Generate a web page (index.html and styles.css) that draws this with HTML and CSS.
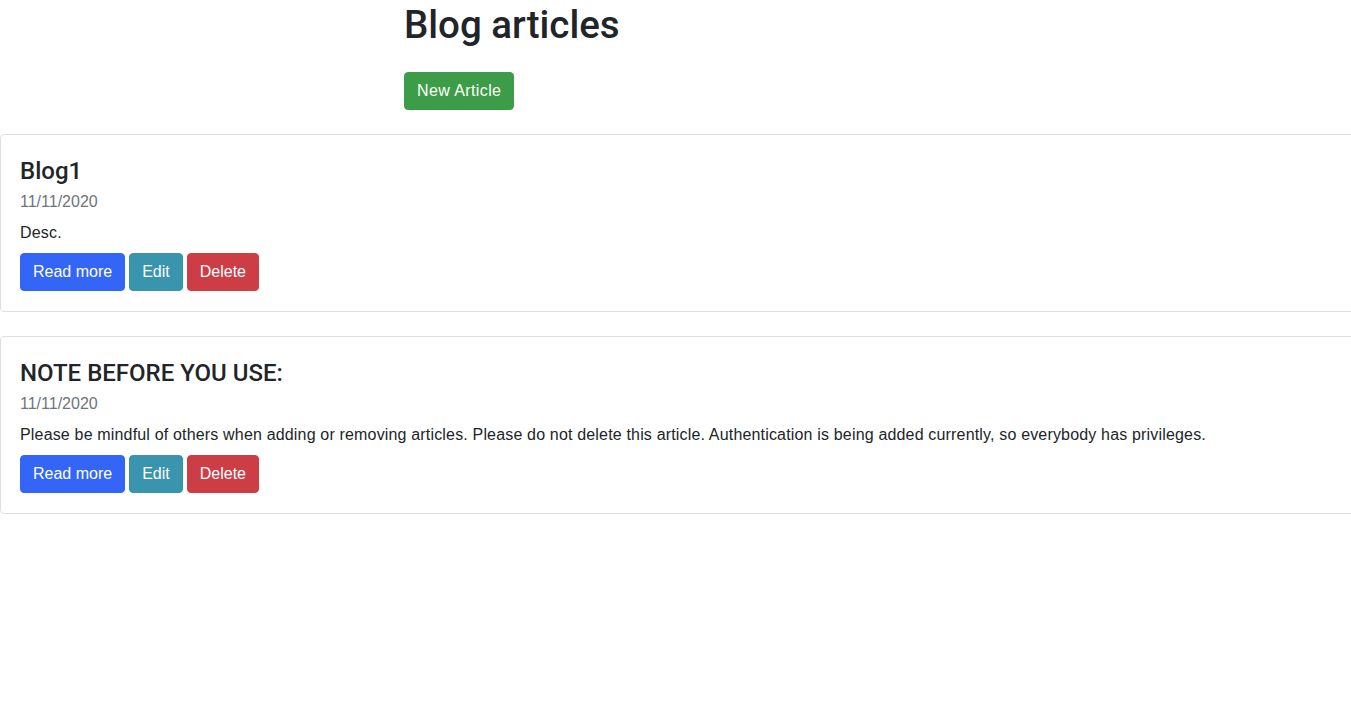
FILE: index.html
```html
<!DOCTYPE html>
<html lang="en">
<head>
<meta charset="utf-8">
<title>Blog articles</title>
<link rel="stylesheet" href="styles.css">
</head>
<body>
<header class="page-header">
  <h1 class="page-title">Blog articles</h1>
  <a class="btn btn-success btn-wide" href="#">New Article</a>
</header>
<main class="articles">
  <article class="card">
    <div class="card-body">
      <h4 class="card-title">Blog1</h4>
      <div class="card-subtitle">11/11/2020</div>
      <p class="card-text">Desc.</p>
      <div class="actions">
        <a class="btn btn-primary" href="#">Read more</a>
        <a class="btn btn-info" href="#">Edit</a>
        <button class="btn btn-danger" type="button">Delete</button>
      </div>
    </div>
  </article>
  <article class="card">
    <div class="card-body">
      <h4 class="card-title">NOTE BEFORE YOU USE:</h4>
      <div class="card-subtitle">11/11/2020</div>
      <p class="card-text">Please be mindful of others when adding or removing articles. Please do not delete this article. Authentication is being added currently, so everybody has privileges.</p>
      <div class="actions">
        <a class="btn btn-primary" href="#">Read more</a>
        <a class="btn btn-info" href="#">Edit</a>
        <button class="btn btn-danger" type="button">Delete</button>
      </div>
    </div>
  </article>
</main>
</body>
</html>
```
FILE: styles.css
```css
html, body {
  overflow-x: hidden;
}
body {
  margin: 0;
  font-family: "Liberation Sans", Arial, sans-serif;
  font-size: 16px;
  line-height: 1.5;
  color: #212529;
  background: #fff;
}
.page-header {
  padding-left: 404px;
  margin-bottom: 24px;
}
.page-title {
  margin: 0 0 22px;
  font-family: Roboto, "Liberation Sans", sans-serif;
  font-size: 38.5px;
  font-weight: 500;
  line-height: 50px;
}
.btn {
  display: inline-block;
  padding: 6px 12px;
  font-family: inherit;
  font-size: 16px;
  line-height: 24px;
  font-weight: 400;
  color: #fff;
  text-decoration: none;
  border: 1px solid transparent;
  border-radius: 4px;
  cursor: pointer;
  vertical-align: middle;
}
.btn-wide {
  letter-spacing: 0.4px;
}
.btn-success { background: #3d9c47; border-color: #3d9c47; }
.btn-primary { background: #3366f7; border-color: #3366f7; }
.btn-info { background: #3994ad; border-color: #3994ad; }
.btn-danger { background: #cc3d45; border-color: #cc3d45; }
.card {
  border: 1px solid #dedede;
  border-radius: 4px;
  margin-right: -10px;
  margin-bottom: 24px;
}
.card-body {
  padding: 22px 20px 20px 19px;
}
.card-title {
  margin: 0 0 12px;
  font-family: Roboto, "Liberation Sans", sans-serif;
  font-size: 24px;
  font-weight: 500;
  line-height: 1.2;
}
.card-subtitle {
  margin: -6px 0 10px;
  color: #6c757d;
  font-size: 16px;
  line-height: 1.2;
}
.card-text {
  margin: 0 0 8px;
  letter-spacing: 0.17px;
}
.actions {
  display: flex;
  gap: 4px;
}
```
